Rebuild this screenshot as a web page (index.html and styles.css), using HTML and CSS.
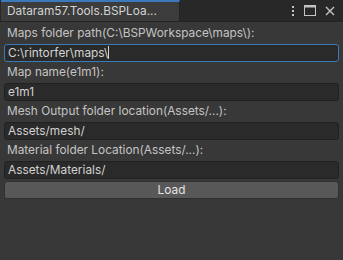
FILE: index.html
```html
<!DOCTYPE html>
<html lang="en">
<head>
    <meta charset="UTF-8">
    <title>Dataram57.Tools.BSPLoader</title>
    <link rel="stylesheet" href="styles.css">
</head>
<body>
    <div class="window">
        <div class="titlebar">
            <div class="tab">Dataram57.Tools.BSPLoa...</div>
            <div class="controls">
                <svg width="4" height="12" viewBox="0 0 4 12"><rect x="1" y="1" width="2" height="2" fill="#c4c4c4"/><rect x="1" y="5" width="2" height="2" fill="#c4c4c4"/><rect x="1" y="9" width="2" height="2" fill="#c4c4c4"/></svg>
                <svg width="12" height="11" viewBox="0 0 12 11"><rect x="0.5" y="0.5" width="11" height="10" fill="none" stroke="#c4c4c4"/><rect x="0.5" y="0.5" width="11" height="2" fill="#c4c4c4"/></svg>
                <svg width="10" height="10" viewBox="0 0 10 10"><path d="M1 1 L9 9 M9 1 L1 9" stroke="#c4c4c4" stroke-width="1.4"/></svg>
            </div>
        </div>
        <div class="content">
            <div class="label">Maps folder path(C:\BSPWorkspace\maps\):</div>
            <div class="field focused">C:\rintorfer\maps\<span class="caret"></span></div>
            <div class="label">Map name(e1m1):</div>
            <div class="field">e1m1</div>
            <div class="label">Mesh Output folder location(Assets/...):</div>
            <div class="field">Assets/mesh/</div>
            <div class="label">Material folder Location(Assets/...):</div>
            <div class="field">Assets/Materials/</div>
            <div class="button">Load</div>
        </div>
    </div>
</body>
</html>
```

FILE: styles.css
```css
body {
    margin: 0;
    background-color: #383838;
    font-family: Inter, "Noto Sans", sans-serif;
    font-size: 11.85px;
    color: #c4c4c4;
}
.window {
    height: 260px;
    background-color: #383838;
}
.titlebar {
    display: flex;
    justify-content: space-between;
    align-items: stretch;
    height: 21px;
    background-color: #282828;
    border-bottom: 1px solid #232323;
}
.tab {
    width: 172px;
    margin-left: 1px;
    padding-left: 6px;
    background-color: #3c3c3c;
    border-top: 2px solid #3a79bb;
    border-right: 1px solid #232323;
    line-height: 19px;
    color: #d2d2d2;
}
.controls {
    display: flex;
    align-items: center;
    gap: 9px;
    padding-right: 8px;
}
.content {
    display: flex;
    flex-direction: column;
    padding: 2px 4px 0 4px;
}
.label {
    height: 19px;
    line-height: 19px;
    padding-left: 3px;
}
.field {
    height: 16px;
    line-height: 16px;
    padding-left: 3px;
    margin: 1px 0 1px 0;
    background-color: #2a2a2a;
    border: 1px solid #212121;
    border-radius: 3px;
    color: #d2d2d2;
}
.field.focused {
    border-color: #3a79bb;
}
.caret {
    display: inline-block;
    width: 1px;
    height: 13px;
    vertical-align: -2px;
    background-color: #d2d2d2;
}
.button {
    height: 16px;
    line-height: 16px;
    margin-top: 1px;
    text-align: center;
    background-color: #585858;
    border: 1px solid #303030;
    border-radius: 3px;
    color: #e4e4e4;
}
```
